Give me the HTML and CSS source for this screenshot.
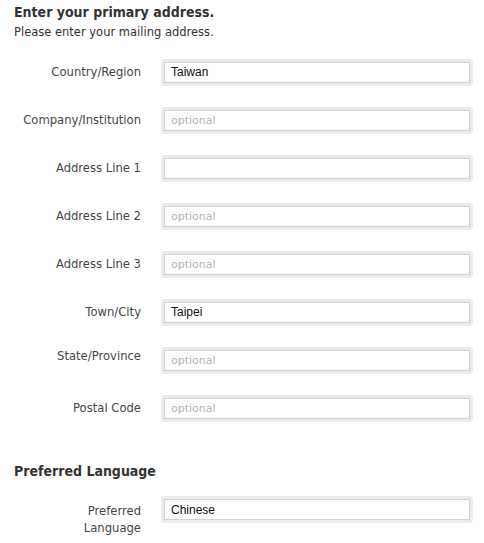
FILE: index.html
```html
<!DOCTYPE html>
<html lang="en">
<head>
<meta charset="utf-8">
<title>Primary address</title>
<link rel="stylesheet" href="styles.css">
</head>
<body>
<div class="page">
  <h1 class="title">Enter your primary address.</h1>
  <p class="subtitle">Please enter your mailing address.</p>

  <div class="form">
    <div class="row">
      <label class="label">Country/Region</label>
      <div class="field"><input class="input" type="text" value="Taiwan"></div>
    </div>
    <div class="row">
      <label class="label">Company/Institution</label>
      <div class="field"><input class="input" type="text" placeholder="optional"></div>
    </div>
    <div class="row">
      <label class="label">Address Line 1</label>
      <div class="field"><input class="input" type="text"></div>
    </div>
    <div class="row">
      <label class="label">Address Line 2</label>
      <div class="field"><input class="input" type="text" placeholder="optional"></div>
    </div>
    <div class="row">
      <label class="label">Address Line 3</label>
      <div class="field"><input class="input" type="text" placeholder="optional"></div>
    </div>
    <div class="row">
      <label class="label">Town/City</label>
      <div class="field"><input class="input" type="text" value="Taipei"></div>
    </div>
    <div class="row">
      <label class="label label-top">State/Province</label>
      <div class="field"><input class="input" type="text" placeholder="optional"></div>
    </div>
    <div class="row">
      <label class="label">Postal Code</label>
      <div class="field"><input class="input" type="text" placeholder="optional"></div>
    </div>
  </div>

  <h2 class="section">Preferred Language</h2>
  <div class="form">
    <div class="row row-tall">
      <label class="label label-multi">Preferred<br>Language</label>
      <div class="field field-top"><input class="input" type="text" value="Chinese"></div>
    </div>
  </div>
</div>
</body>
</html>
```

FILE: styles.css
```css
html, body {
  margin: 0;
  padding: 0;
  background: #ffffff;
}

.page {
  padding: 4px 11px 0 14px;
  font-family: "DejaVu Sans", "Liberation Sans", sans-serif;
  color: #444444;
}

.title,
.section {
  margin: 0;
  font-family: "DejaVu Sans Condensed", "DejaVu Sans", sans-serif;
  font-weight: bold;
  font-size: 14px;
  line-height: 17px;
  color: #333333;
}

.subtitle {
  margin: 3px 0 0;
  font-size: 11.5px;
  line-height: 16px;
  color: #333333;
}

.form {
  margin-top: 8px;
  display: flex;
  flex-direction: column;
}

.row {
  display: grid;
  grid-template-columns: 127px 312px;
  column-gap: 20px;
  height: 48px;
  align-items: center;
}

.row-tall {
  height: 56px;
  align-items: start;
}

.label {
  text-align: right;
  font-size: 11.6px;
  line-height: 18px;
  color: #464646;
  white-space: nowrap;
}

.label-top {
  align-self: start;
  margin-top: 11px;
}

.label-multi {
  margin-top: 17px;
  line-height: 17px;
}

.field {
  padding: 3px;
  background: #ececec;
  border-radius: 4px;
}

.field-top {
  margin-top: 10px;
}

.input {
  display: block;
  box-sizing: border-box;
  width: 100%;
  height: 21px;
  margin: 0;
  padding: 0 0 0 6px;
  border: 1px solid #d2d2d2;
  border-radius: 0;
  background: #ffffff;
  font-family: "Liberation Sans", Arial, sans-serif;
  font-size: 12px;
  color: #111111;
  outline: none;
}

.input::placeholder {
  font-family: "DejaVu Sans", sans-serif;
  font-size: 11px;
  color: #b4b4b4;
}

.section {
  margin-top: 31px;
}

.section + .form {
  margin-top: 6px;
}
```
